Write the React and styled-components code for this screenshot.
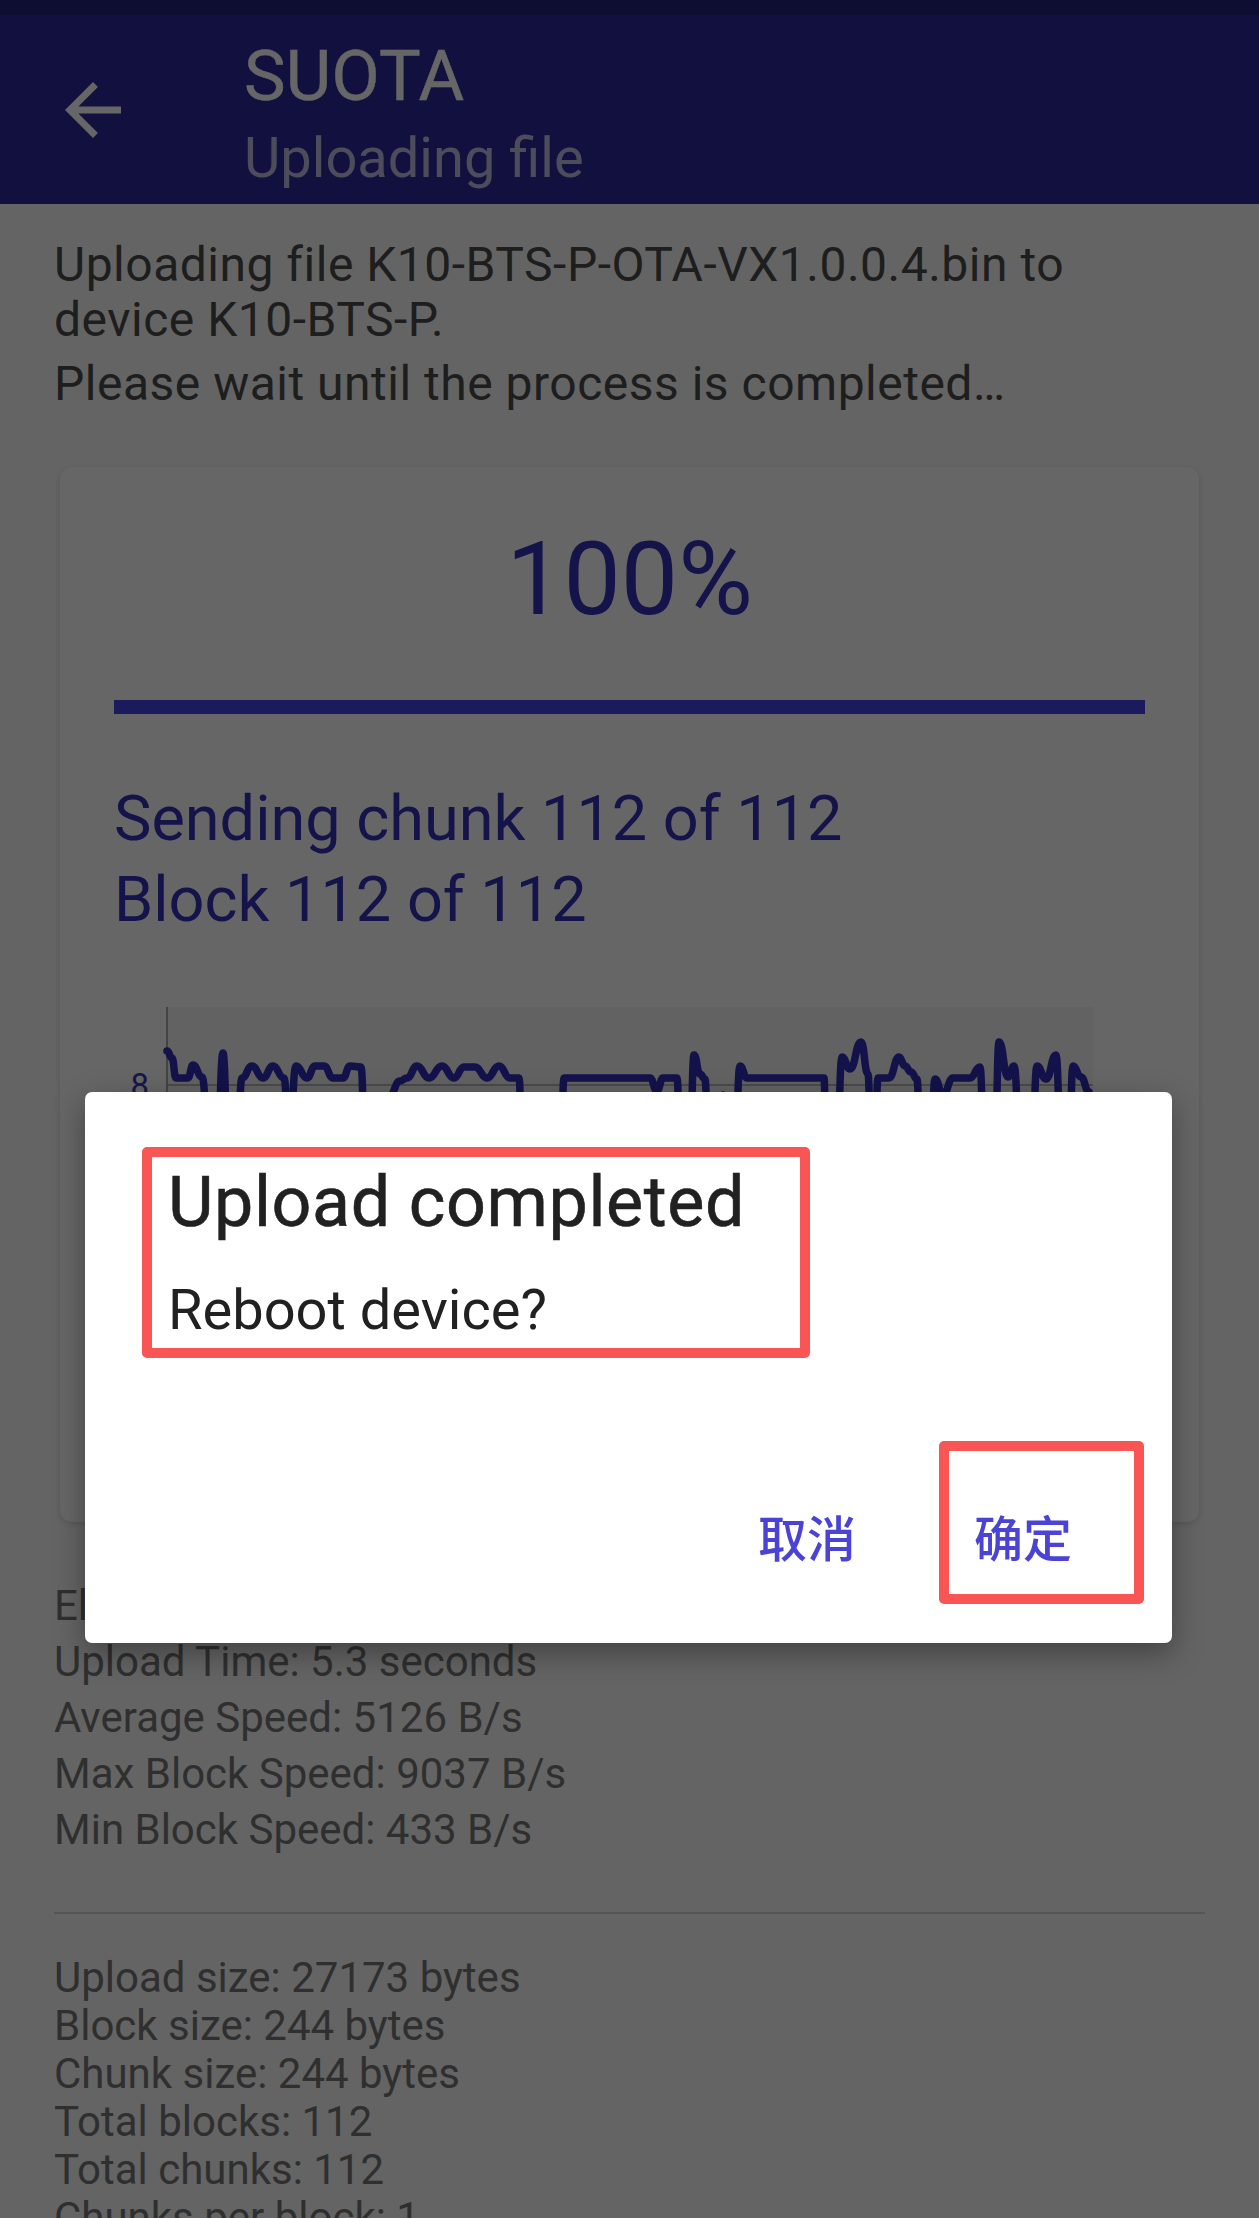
import React from "react";
import styled, { createGlobalStyle } from "styled-components";

const GlobalStyle = createGlobalStyle`
  html, body { margin: 0; padding: 0; }
  body {
    background: #fafafa;
    font-family: Roboto, "Noto Sans", "Noto Sans CJK SC", sans-serif;
    -webkit-font-smoothing: antialiased;
  }
  * { box-sizing: border-box; }
`;

const Page = styled.div`
  position: relative;
  width: 1259px;
  min-height: 2218px;
  background: #fafafa;
`;

const StatusBar = styled.div`
  height: 15px;
  background: #23237f;
`;

const AppBar = styled.header`
  height: 189px;
  background: #2b289e;
  display: flex;
  align-items: center;
`;

const BackButton = styled.div`
  width: 84px;
  height: 84px;
  margin-left: 51px;
  display: flex;
  align-items: center;
  justify-content: center;
  svg { display: block; }
`;

const TitleBlock = styled.div`
  align-self: flex-start;
  margin-left: 109px;
  padding-top: 20px;
  display: flex;
  flex-direction: column;
  gap: 8px;
`;

const Title = styled.div`
  font-size: 70px;
  line-height: 82px;
  font-weight: 400;
  letter-spacing: 0.3px;
  color: #ffffff;
  -webkit-text-stroke: 0.5px #ffffff;
`;

const Subtitle = styled.div`
  font-size: 56px;
  line-height: 66px;
  color: rgba(255, 255, 255, 0.7);
`;

const Content = styled.main`
  padding: 33px 54px 0 54px;
`;

const Intro = styled.p`
  margin: ${(p) => (p.$spaced ? "9px" : "0")} 0 0 0;
  font-size: 48px;
  line-height: 55px;
  letter-spacing: 0.5px;
  color: #4b4b4b;
`;

const Card = styled.section`
  margin: 56px 6px 0 6px;
  padding: 52px 54px;
  background: #ffffff;
  border-radius: 12px;
  box-shadow: 0 2px 6px rgba(0, 0, 0, 0.14);
`;

const Percent = styled.div`
  text-align: center;
  font-size: 102px;
  line-height: 120px;
  color: #3330b9;
`;

const ProgressTrack = styled.div`
  margin-top: 61px;
  height: 14px;
  background: #d6d5f5;
`;

const ProgressFill = styled.div`
  height: 100%;
  background: #4542e6;
`;

const StatusLines = styled.div`
  margin-top: 64px;
`;

const StatusLine = styled.div`
  font-size: 63px;
  line-height: 81px;
  color: #3330b9;
`;

const ChartBox = styled.div`
  margin-top: 67px;
  height: 463px;
  svg { display: block; }
`;

const Stats = styled.div`
  margin-top: ${(p) => p.$top}px;
  font-size: 42px;
  line-height: ${(p) => p.$lh}px;
  color: #777777;
`;

const Divider = styled.hr`
  margin: 54px 0 0 0;
  border: none;
  height: 2px;
  background: #d4d4d4;
`;

const Scrim = styled.div`
  position: fixed;
  inset: 0;
  background: rgba(0, 0, 0, 0.6);
`;

const Dialog = styled.div`
  position: fixed;
  left: 85px;
  top: 1092px;
  width: 1087px;
  height: 551px;
  padding: 69px 100px 79px 83px;
  background: #ffffff;
  border-radius: 7px;
  box-shadow: 0 10px 30px rgba(0, 0, 0, 0.35);
  display: flex;
  flex-direction: column;
`;

const DialogTitle = styled.div`
  font-size: 70px;
  line-height: 82px;
  font-weight: 400;
  letter-spacing: 0.6px;
  color: #212121;
  -webkit-text-stroke: 0.6px #212121;
`;

const DialogMessage = styled.div`
  margin-top: 34px;
  font-size: 56px;
  line-height: 66px;
  color: #212121;
`;

const ButtonRow = styled.div`
  margin-top: auto;
  display: flex;
  justify-content: flex-end;
  gap: 118px;
`;

const TextButton = styled.button`
  border: none;
  background: none;
  padding: 0;
  width: 98px;
  font-family: "Noto Sans CJK SC", Roboto, sans-serif;
  font-size: 49px;
  line-height: 56px;
  font-weight: 500;
  color: #4a43d6;
  text-align: center;
`;

const Highlight = styled.div`
  position: absolute;
  left: ${(p) => p.$x}px;
  top: ${(p) => p.$y}px;
  width: ${(p) => p.$w}px;
  height: ${(p) => p.$h}px;
  border: 10px solid #fa5555;
  border-radius: 5px;
  pointer-events: none;
`;

const points = [
  [0, 44], [5, 51], [9, 71], [21, 71], [26, 58], [35, 70], [42, 140], [50, 160],
  [56, 46], [61, 140], [70, 140], [75, 71], [85, 59], [96, 71], [106, 59], [117, 71],
  [122, 140], [129, 59], [140, 71], [148, 59], [157, 59], [166, 71], [176, 71], [183, 59],
  [194, 60], [198, 140], [215, 150], [222, 90], [233, 74], [240, 71], [250, 59], [262, 71],
  [275, 59], [287, 71], [297, 60], [308, 60], [320, 71], [332, 59], [343, 71], [352, 71],
  [355, 140], [375, 170], [394, 140], [397, 71], [483, 71], [490, 84], [496, 71], [510, 71],
  [513, 140], [523, 140], [527, 48], [533, 67], [538, 72], [541, 140], [551, 140], [556, 88],
  [560, 140], [568, 140], [573, 59], [580, 71], [657, 71], [659, 140], [670, 140], [675, 50],
  [683, 62], [694, 35], [701, 67], [704, 140], [708, 140], [711, 71], [722, 71], [732, 50],
  [738, 59], [744, 65], [750, 72], [753, 140], [764, 140], [768, 72], [776, 88], [786, 71],
  [803, 71], [813, 60], [817, 140], [828, 140], [832, 35], [841, 70], [847, 59], [853, 140],
  [865, 140], [870, 59], [879, 72], [889, 48], [894, 140], [902, 140], [906, 59], [914, 70],
  [922, 85],
];

function smoothPath(pts) {
  let d = `M${pts[0][0]},${pts[0][1]}`;
  for (let i = 1; i < pts.length; i++) {
    const [x0, y0] = pts[i - 1];
    const [x1, y1] = pts[i];
    const mx = (x0 + x1) / 2;
    d += ` C${mx},${y0} ${mx},${y1} ${x1},${y1}`;
  }
  return d;
}

function SpeedChart() {
  const plotW = 926;
  const plotH = 400;
  return (
    <svg width="1031" height="463" viewBox="0 0 1031 463">
      <g transform="translate(53,0)">
        <rect x="0" y="0" width={plotW} height={plotH} fill="#f4f4f4" />
        {[78, 178, 278, 378].map((y) => (
          <line key={y} x1="0" x2={plotW} y1={y} y2={y} stroke="#b9b9b9" strokeWidth="2" />
        ))}
        <line x1="0" x2="0" y1="0" y2={plotH} stroke="#a8a8a8" strokeWidth="2" />
        <text x="-18" y="89.7" textAnchor="end" fontFamily="Roboto, sans-serif" fontSize="33" fill="#3d3ab5">8</text>
        <path
          d={smoothPath(points)}
          fill="none"
          stroke="#302eb8"
          strokeWidth="7.5"
          strokeLinejoin="round"
          strokeLinecap="round"
        />
      </g>
    </svg>
  );
}

export default function App() {
  return (
    <Page>
      <GlobalStyle />
      <StatusBar />
      <AppBar>
        <BackButton>
          <svg width="84" height="84" viewBox="0 0 24 24">
            <path fill="#ffffff" d="M20 11H7.83l5.59-5.59L12 4l-8 8 8 8 1.41-1.41L7.83 13H20v-2z" />
          </svg>
        </BackButton>
        <TitleBlock>
          <Title>SUOTA</Title>
          <Subtitle>Uploading file</Subtitle>
        </TitleBlock>
      </AppBar>
      <Content>
        <Intro>
          Uploading file K10-BTS-P-OTA-VX1.0.0.4.bin to
          <br />
          device K10-BTS-P.
        </Intro>
        <Intro $spaced>Please wait until the process is completed…</Intro>
        <Card>
          <Percent>100%</Percent>
          <ProgressTrack>
            <ProgressFill style={{ width: "100%" }} />
          </ProgressTrack>
          <StatusLines>
            <StatusLine>Sending chunk 112 of 112</StatusLine>
            <StatusLine>Block 112 of 112</StatusLine>
          </StatusLines>
          <ChartBox>
            <SpeedChart />
          </ChartBox>
        </Card>
        <Stats $top={56} $lh={56}>
          <div>Elapsed Time: 5.9 seconds</div>
          <div>Upload Time: 5.3 seconds</div>
          <div>Average Speed: 5126 B/s</div>
          <div>Max Block Speed: 9037 B/s</div>
          <div>Min Block Speed: 433 B/s</div>
        </Stats>
        <Divider />
        <Stats $top={40} $lh={48}>
          <div>Upload size: 27173 bytes</div>
          <div>Block size: 244 bytes</div>
          <div>Chunk size: 244 bytes</div>
          <div>Total blocks: 112</div>
          <div>Total chunks: 112</div>
          <div>Chunks per block: 1</div>
        </Stats>
      </Content>
      <Scrim />
      <Dialog>
        <DialogTitle>Upload completed</DialogTitle>
        <DialogMessage>Reboot device?</DialogMessage>
        <ButtonRow>
          <TextButton>取消</TextButton>
          <TextButton>确定</TextButton>
        </ButtonRow>
        <Highlight $x={57} $y={55} $w={668} $h={211} />
        <Highlight $x={854} $y={349} $w={205} $h={163} />
      </Dialog>
    </Page>
  );
}
